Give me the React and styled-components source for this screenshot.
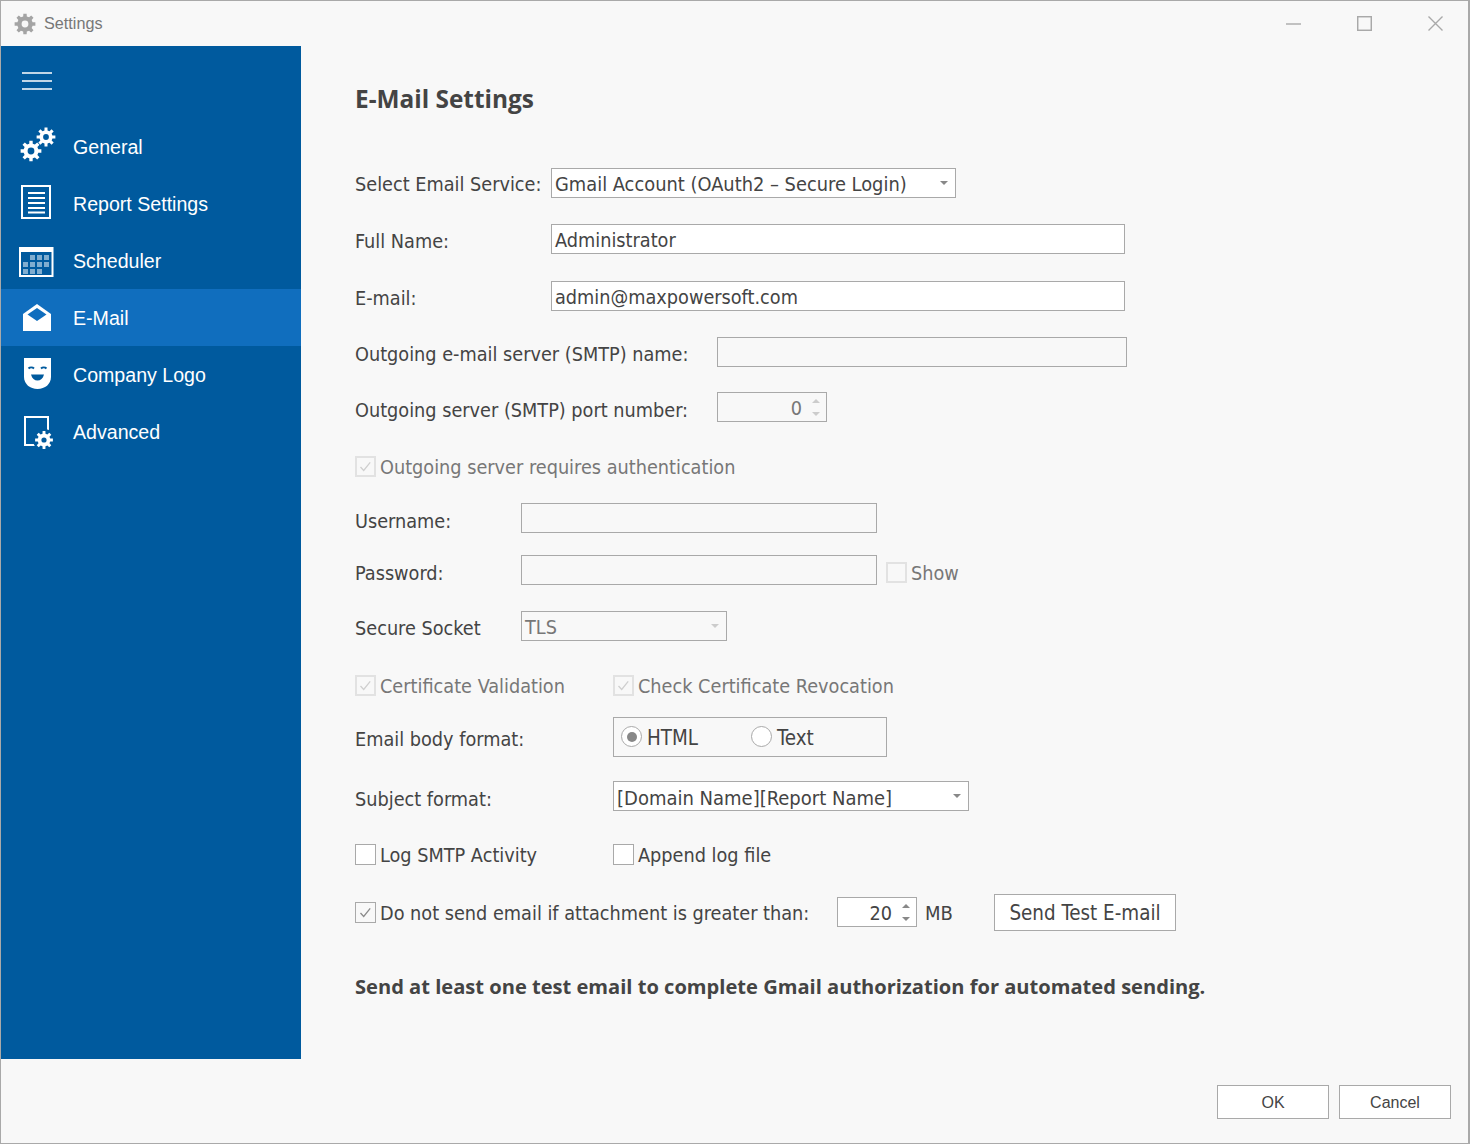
import React from "react";
import styled, { createGlobalStyle } from "styled-components";

const Global = createGlobalStyle`
  html, body { margin: 0; padding: 0; background: #f8f8f8; }
  * { box-sizing: border-box; }
`;

const UI = `"DejaVu Sans Condensed", "Liberation Sans", sans-serif`;
const SANS = `"Liberation Sans", Arial, sans-serif`;

const Window = styled.div`
  width: 1470px; height: 1144px; display: flex; flex-direction: column;
  background: #f8f8f8; border: 1px solid #a9a9a9; border-right-width: 2px;
  font-family: ${UI}; font-size: 19.7px; color: #444; overflow: hidden;
`;
const TitleBar = styled.header`
  height: 45px; flex: none; display: flex; align-items: center; padding-left: 13px;
`;
const TitleText = styled.span`
  font-family: ${SANS}; font-size: 16.2px; color: #777; margin-left: 8px; flex: 1; margin-top: -1px;
`;
const WinControls = styled.div`
  display: flex; gap: 56px; margin-right: 25px; margin-top: -1px;
`;
const Body = styled.div`
  display: flex; height: 1013px; flex: none;
`;
const Sidebar = styled.nav`
  width: 300px; flex: none; background: #005a9e; color: #fff;
  font-family: ${SANS}; font-size: 19.6px;
`;
const MenuButton = styled.div`
  height: 72px; padding: 26px 0 0 21px;
`;
const NavItem = styled.div`
  height: 57px; display: flex; align-items: center; padding: 2px 0 0 72px; position: relative;
  background: ${(p) => (p.$active ? "#106ebe" : "transparent")};
`;
const NavIcon = styled.svg`
  position: absolute; left: 16px; top: 0; width: 42px; height: 57px; color: #fff;
`;
const Main = styled.main`
  flex: 1; padding: 38px 0 0 54px; display: flex; flex-direction: column;
`;
const Heading = styled.h1`
  margin: 0; font-size: 24.4px; font-weight: 700; height: 30px; line-height: 30px; color: #444;
  font-family: "Open Sans", ${SANS};
`;
const Row = styled.div`
  display: flex; align-items: flex-start; flex: none;
  height: ${(p) => p.$h || 30}px; margin-top: ${(p) => p.$top}px;
`;
const Label = styled.label`
  display: block; flex: none; width: ${(p) => p.$w}px; line-height: 30px; padding-top: ${(p) => (p.$dy || 0) + 1}px;
  white-space: nowrap;
`;
const Box = styled.div`
  height: 30px; flex: none; width: ${(p) => p.$w}px; line-height: 28px; padding: 2px 3px 0;
  border: 1px solid #a9a9a9; background: ${(p) => (p.$off ? "#f8f8f8" : "#fff")};
  color: ${(p) => (p.$off ? "#777" : "#444")}; white-space: nowrap;
`;
const SelectBox = styled(Box)`
  display: flex; align-items: center; justify-content: space-between; padding: 4px 7px 0 3px;
  font-size: ${(p) => p.$fs || 19.7}px;
`;
const Caret = styled.i`
  width: 0; height: 0; border: 4px solid transparent; border-top: 4px solid ${(p) => (p.$off ? "#ccc" : "#888")};
  border-bottom: 0; display: block; margin-top: -4px;
`;
const Spinner = styled(Box)`
  display: flex; align-items: center; justify-content: flex-end; gap: 10px; padding: 4px 6px 0 3px;
`;
const Arrows = styled.span`
  display: flex; flex-direction: column; gap: 9px; margin-top: -4px;
`;
const Arrow = styled.i`
  display: block; width: 0; height: 0; border: 4px solid transparent; border-bottom: 0; border-top: 4px solid ${(p) => (p.$off ? "#ccc" : "#888")};
  transform: ${(p) => (p.$up ? "rotate(180deg)" : "none")};
`;
const CheckWrap = styled.div`
  display: flex; align-items: center; flex: none; height: 30px; width: ${(p) => (p.$w ? `${p.$w}px` : "auto")};
  color: ${(p) => (p.$off ? "#777" : "#444")}; gap: 4px; white-space: nowrap;
  margin-top: ${(p) => p.$dy || 0}px; margin-left: ${(p) => p.$dx || 0}px;
`;
const CheckText = styled.span`
  padding-top: 2px;
`;
const CheckSquare = styled.span`
  width: 21px; height: 21px; flex: none; display: flex; align-items: center; justify-content: center;
  border: ${(p) => (p.$off ? 2 : 1)}px solid ${(p) => (p.$off ? "#e2e2e2" : "#a9a9a9")};
  background: ${(p) => (p.$off ? "#f8f8f8" : p.$checked ? "#f8f8f8" : "#fff")};
`;
const RadioGroup = styled.div`
  width: 274px; height: 40px; border: 1px solid #a9a9a9; display: flex; align-items: center; padding-left: 7px;
  font-size: 20.4px;
`;
const RadioItem = styled.div`
  display: flex; align-items: center; gap: 5px; width: ${(p) => p.$w}px; margin-top: -1px;
`;
const RadioText = styled.span`
  padding-top: 2px;
`;
const RadioCircle = styled.span`
  width: 21px; height: 21px; border-radius: 50%; border: 1px solid #a9a9a9; background: #fff; flex: none;
  display: flex; align-items: center; justify-content: center;
  &::after { content: ""; width: 10px; height: 10px; border-radius: 50%; background: ${(p) => (p.$on ? "#888" : "transparent")}; }
`;
const SpinSlot = styled.div`
  margin-top: 3px; flex: none;
`;
const Unit = styled.span`
  line-height: 30px; padding-top: 3px; margin-left: 8px; width: 69px; flex: none; margin-top: 1px; font-size: 20px;
`;
const TestButton = styled.button`
  width: 182px; height: 37px; background: #fff; border: 1px solid #a9a9a9; color: #444;
  font-family: ${UI}; font-size: 20.4px; padding: 0;
`;
const Note = styled.p`
  margin: 0; line-height: 30px; font-weight: 700; font-size: 20.1px; color: #444; font-family: "Open Sans", ${SANS};
  white-space: nowrap;
`;
const Footer = styled.footer`
  flex: 1; display: flex; justify-content: flex-end; gap: 10px; padding: 26px 17px 0 0;
`;
const FootButton = styled.button`
  width: 112px; height: 34px; background: #fff; border: 1px solid #a9a9a9; color: #444;
  font-family: ${SANS}; font-size: 16px; padding: 2px 0 0;
`;

function gearPath(cx, cy, rOuter, rInner, hole, teeth = 8) {
  const pts = [];
  const step = (Math.PI * 2) / teeth;
  for (let i = 0; i < teeth; i++) {
    const a = i * step - Math.PI / 2;
    const w = step * 0.2;
    const w2 = step * 0.3;
    const p = (r, t) => `${(cx + r * Math.cos(t)).toFixed(2)} ${(cy + r * Math.sin(t)).toFixed(2)}`;
    pts.push(p(rInner, a - w2), p(rOuter, a - w), p(rOuter, a + w), p(rInner, a + w2));
  }
  const ring = `M${pts.join("L")}Z`;
  const h = `M${cx - hole} ${cy}a${hole} ${hole} 0 1 0 ${hole * 2} 0a${hole} ${hole} 0 1 0 ${-hole * 2} 0Z`;
  return `${ring}${h}`;
}

const TitleGear = () => (
  <svg width="22" height="22" viewBox="0 0 22 22">
    <path d={gearPath(11, 11, 10.5, 7.8, 3.4)} fill="#a4a4a4" fillRule="evenodd" />
  </svg>
);

const WinIcon = ({ children }) => (
  <svg width="15" height="15" viewBox="0 0 15 15" fill="none" stroke="#a9a9a9" strokeWidth="1.4">{children}</svg>
);

const Check = ({ off }) => (
  <svg width="15" height="15" viewBox="0 0 15 15" fill="none" stroke={off ? "#cfcfcf" : "#8a8a8a"} strokeWidth="1.3">
    <path d="M2.5 8l3.2 3.4 6.5-8" />
  </svg>
);

const Checkbox = ({ label, w, off, checked, dy, dx }) => (
  <CheckWrap $w={w} $off={off} $dy={dy} $dx={dx}>
    <CheckSquare $off={off} $checked={checked}>{checked && <Check off={off} />}</CheckSquare>
    {label && <CheckText>{label}</CheckText>}
  </CheckWrap>
);

const Spin = ({ w, value, off }) => (
  <Spinner $w={w} $off={off}>
    {value}
    <Arrows><Arrow $up $off={off} /><Arrow $off={off} /></Arrows>
  </Spinner>
);

const Select = ({ w, value, off, fs }) => (
  <SelectBox $w={w} $off={off} $fs={fs}>{value}<Caret $off={off} /></SelectBox>
);

const cells = [
  [30, 255], [37, 255], [44, 255],
  [23, 262], [30, 262], [37, 262], [44, 262],
  [23, 269], [30, 269], [37, 269],
];

// Icon coordinates are relative to the 42x57 slot placed at x = 17 in the window.
const icons = {
  general: (
    <g fill="currentColor" fillRule="evenodd">
      <path d={gearPath(14, 33, 10.5, 7.5, 3.4)} />
      <path d={gearPath(29, 19, 9.5, 6.6, 2.9)} />
    </g>
  ),
  report: (
    <g>
      <rect x="5" y="11" width="28" height="32" fill="none" stroke="currentColor" strokeWidth="2" />
      <path d="M11 18h17M11 23h17M11 28h17M11 33h17M11 37.500h17" stroke="currentColor" strokeWidth="2" />
    </g>
  ),
  scheduler: (
    <g>
      <rect x="3" y="16" width="32.500" height="28" fill="none" stroke="currentColor" strokeWidth="2" />
      <rect x="3" y="15" width="32.500" height="5" fill="currentColor" />
      {cells.map(([x, y]) => (
        <rect key={`${x}-${y}`} x={x - 17} y={y - 232} width="5" height="5" fill="currentColor" opacity="0.5" />
      ))}
    </g>
  ),
  mail: (
    <g fill="currentColor">
      <path d="M20 15L34 25V42H6V25Z" />
      <path d="M20 19L29.500 25.500 20 32 10.500 25.500Z" fill="#106ebe" />
    </g>
  ),
  logo: (
    <g>
      <path d="M7 12H34V31C34 38 28 43 20.500 43S7 38 7 31Z" fill="currentColor" />
      <path d="M11.500 22.500a3.500 2.500 0 0 1 5.500 0M24 22.500a3.500 2.500 0 0 1 5.500 0" fill="none" stroke="#005a9e" strokeWidth="2" />
      <path d="M14 28.500h13c-1 4-3.500 6-6.500 6s-5.500-2-6.500-6Z" fill="#005a9e" />
    </g>
  ),
  advanced: (
    <g>
      <rect x="8" y="14" width="23" height="28" fill="none" stroke="currentColor" strokeWidth="2" />
      <circle cx="27" cy="37" r="11" fill="#005a9e" />
      <path d={gearPath(27, 37, 9, 6.4, 2.6)} fill="currentColor" fillRule="evenodd" />
    </g>
  ),
};

const nav = [
  ["general", "General"],
  ["report", "Report Settings"],
  ["scheduler", "Scheduler"],
  ["mail", "E-Mail", true],
  ["logo", "Company Logo"],
  ["advanced", "Advanced"],
];

export default function App() {
  return (
    <Window>
      <Global />
      <TitleBar>
        <TitleGear />
        <TitleText>Settings</TitleText>
        <WinControls>
          <WinIcon><path d="M0 8h15" /></WinIcon>
          <WinIcon><rect x="0.700" y="0.700" width="13.600" height="13.600" strokeWidth="1.500" /></WinIcon>
          <WinIcon><path d="M0.500 0.500l14 14M14.500 0.500l-14 14" /></WinIcon>
        </WinControls>
      </TitleBar>
      <Body>
        <Sidebar>
          <MenuButton>
            <svg width="32" height="18" viewBox="0 0 32 18" stroke="#fff" strokeWidth="1.300">
              <path d="M0 1h30M0 9h30M0 17h30" />
            </svg>
          </MenuButton>
          {nav.map(([k, t, a]) => (
            <NavItem key={k} $active={a}>
              <NavIcon viewBox="0 0 42 57">{icons[k]}</NavIcon>
              {t}
            </NavItem>
          ))}
        </Sidebar>
        <Main>
          <Heading>E-Mail Settings</Heading>
          <Row $top={54}>
            <Label $w={196} $dy={1}>Select Email Service:</Label>
            <Select w={405} fs={19.85} value="Gmail Account (OAuth2 – Secure Login)" />
          </Row>
          <Row $top={26}>
            <Label $w={196} $dy={2}>Full Name:</Label>
            <Box $w={574}>Administrator</Box>
          </Row>
          <Row $top={27}>
            <Label $w={196} $dy={2}>E-mail:</Label>
            <Box $w={574}>admin@maxpowersoft.com</Box>
          </Row>
          <Row $top={26}>
            <Label $w={362} $dy={2}>Outgoing e-mail server (SMTP) name:</Label>
            <Box $w={410} $off />
          </Row>
          <Row $top={25}>
            <Label $w={362} $dy={3}>Outgoing server (SMTP) port number:</Label>
            <Spin w={110} value="0" off />
          </Row>
          <Row $top={29}>
            <Checkbox off checked label="Outgoing server requires authentication" />
          </Row>
          <Row $top={22}>
            <Label $w={166} $dy={3}>Username:</Label>
            <Box $w={356} $off />
          </Row>
          <Row $top={22}>
            <Label $w={166} $dy={3}>Password:</Label>
            <Box $w={356} $off />
            <Checkbox off label="Show" dy={2} dx={9} />
          </Row>
          <Row $top={26}>
            <Label $w={166} $dy={2}>Secure Socket</Label>
            <Select w={206} value="TLS" off />
          </Row>
          <Row $top={29}>
            <Checkbox off checked w={258} label="Certificate Validation" />
            <Checkbox off checked label="Check Certificate Revocation" />
          </Row>
          <Row $top={17} $h={40}>
            <Label $w={258} $dy={7}>Email body format:</Label>
            <RadioGroup>
              <RadioItem $w={130}><RadioCircle $on /><RadioText>HTML</RadioText></RadioItem>
              <RadioItem $w={100}><RadioCircle /><RadioText>Text</RadioText></RadioItem>
            </RadioGroup>
          </Row>
          <Row $top={24}>
            <Label $w={258} $dy={3}>Subject format:</Label>
            <Select w={356} fs={20} value="[Domain Name][Report Name]" />
          </Row>
          <Row $top={28}>
            <Checkbox w={258} label="Log SMTP Activity" />
            <Checkbox label="Append log file" />
          </Row>
          <Row $top={25} $h={37}>
            <Checkbox checked w={482} dy={3} label="Do not send email if attachment is greater than:" />
            <SpinSlot><Spin w={80} value="20" /></SpinSlot>
            <Unit>MB</Unit>
            <TestButton>Send Test E-mail</TestButton>
          </Row>
          <Row $top={41}>
            <Note>Send at least one test email to complete Gmail authorization for automated sending.</Note>
          </Row>
        </Main>
      </Body>
      <Footer>
        <FootButton>OK</FootButton>
        <FootButton>Cancel</FootButton>
      </Footer>
    </Window>
  );
}
